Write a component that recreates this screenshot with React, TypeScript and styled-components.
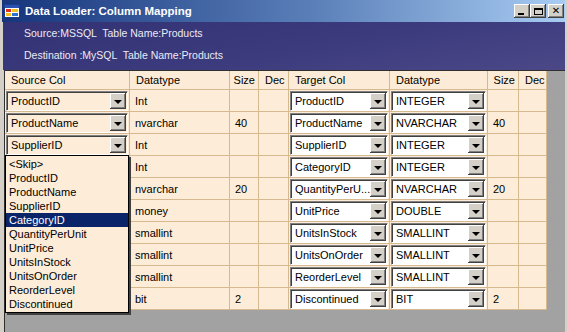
import React from 'react';
import styled, { createGlobalStyle } from 'styled-components';

const GlobalStyle = createGlobalStyle`
  html, body {
    margin: 0;
    padding: 0;
    background: #d4d0c8;
  }
  body {
    font-family: "Liberation Sans", Arial, sans-serif;
    font-size: 11px;
  }
`;

type MapRow = {
  src: string;
  type: string;
  size: string;
  tgt: string;
  ttype: string;
  tsize: string;
};

const rows: MapRow[] = [
  { src: 'ProductID', type: 'Int', size: '', tgt: 'ProductID', ttype: 'INTEGER', tsize: '' },
  { src: 'ProductName', type: 'nvarchar', size: '40', tgt: 'ProductName', ttype: 'NVARCHAR', tsize: '40' },
  { src: 'SupplierID', type: 'Int', size: '', tgt: 'SupplierID', ttype: 'INTEGER', tsize: '' },
  { src: 'CategoryID', type: 'Int', size: '', tgt: 'CategoryID', ttype: 'INTEGER', tsize: '' },
  { src: 'QuantityPerUnit', type: 'nvarchar', size: '20', tgt: 'QuantityPerU...', ttype: 'NVARCHAR', tsize: '20' },
  { src: 'UnitPrice', type: 'money', size: '', tgt: 'UnitPrice', ttype: 'DOUBLE', tsize: '' },
  { src: 'UnitsInStock', type: 'smallint', size: '', tgt: 'UnitsInStock', ttype: 'SMALLINT', tsize: '' },
  { src: 'UnitsOnOrder', type: 'smallint', size: '', tgt: 'UnitsOnOrder', ttype: 'SMALLINT', tsize: '' },
  { src: 'ReorderLevel', type: 'smallint', size: '', tgt: 'ReorderLevel', ttype: 'SMALLINT', tsize: '' },
  { src: 'Discontinued', type: 'bit', size: '2', tgt: 'Discontinued', ttype: 'BIT', tsize: '2' },
];

// the open list hangs from this row and hides the source cells below it
const openRow = 2;

const options = [
  '<Skip>',
  'ProductID',
  'ProductName',
  'SupplierID',
  'CategoryID',
  'QuantityPerUnit',
  'UnitPrice',
  'UnitsInStock',
  'UnitsOnOrder',
  'ReorderLevel',
  'Discontinued',
];

const TitleIcon = () => (
  <svg width="16" height="16" viewBox="0 0 16 16">
    <rect x="0.5" y="1.5" width="15" height="13" fill="#ffffff" stroke="#1a3c8c" />
    <rect x="1" y="2" width="14" height="3" fill="#2850b0" />
    <rect x="2" y="6" width="5" height="3" fill="#e03020" />
    <rect x="8" y="6" width="6" height="3" fill="#f0c020" />
    <rect x="2" y="10" width="5" height="3" fill="#f0c020" />
    <rect x="8" y="10" width="6" height="3" fill="#3070d0" />
  </svg>
);

const Combo = ({ value, $white }: { value?: string; $white?: boolean }) => (
  <ComboBox $white={$white}>
    <ComboText>{value}</ComboText>
    <DropButton>
      <Arrow />
    </DropButton>
  </ComboBox>
);

const App = () => {
  return (
    <>
      <GlobalStyle />
      <Frame>
        <TitleBar>
          <TitleIcon />
          <TitleText>Data Loader: Column Mapping</TitleText>
          <Controls>
            <CtlButton>
              <MinGlyph />
            </CtlButton>
            <CtlButton>
              <MaxGlyph />
            </CtlButton>
            <CtlButton $gap>
              <CloseGlyph>✕</CloseGlyph>
            </CtlButton>
          </Controls>
        </TitleBar>

        <InfoPanel>
          <InfoLine>Source:MSSQL  Table Name:Products</InfoLine>
          <InfoLine>Destination :MySQL  Table Name:Products</InfoLine>
        </InfoPanel>

        <GridArea>
          <Grid>
            <HeadCell>Source Col</HeadCell>
            <HeadCell>Datatype</HeadCell>
            <HeadCell $right>Size</HeadCell>
            <HeadCell>Dec</HeadCell>
            <HeadCell>Target Col</HeadCell>
            <HeadCell>Datatype</HeadCell>
            <HeadCell $right>Size</HeadCell>
            <HeadCell>Dec</HeadCell>

            {rows.map((r, i) => (
              <React.Fragment key={r.src}>
                <Cell $combo>
                  {i <= openRow ? <Combo value={r.src} /> : null}
                </Cell>
                <Cell>{r.type}</Cell>
                <Cell>{r.size}</Cell>
                <Cell />
                <Cell $combo>
                  <Combo value={r.tgt} $white />
                </Cell>
                <Cell $combo>
                  <Combo value={r.ttype} $white />
                </Cell>
                <Cell>{r.tsize}</Cell>
                <Cell />
              </React.Fragment>
            ))}
          </Grid>

          <DropList>
            {options.map((o) => (
              <DropItem key={o} $selected={o === 'CategoryID'}>
                {o}
              </DropItem>
            ))}
          </DropList>
        </GridArea>
      </Frame>
    </>
  );
};

export default App;

const Frame = styled.div`
  width: 567px;
  height: 332px;
  box-sizing: border-box;
  padding: 0 2px 0 3px;
  background: #d4d0c8;
  display: flex;
  flex-direction: column;
  overflow: hidden;
`;

const TitleBar = styled.div`
  height: 22px;
  flex: none;
  margin-left: -1px;
  box-sizing: border-box;
  padding: 0 0 0 2px;
  display: flex;
  align-items: center;
  gap: 5px;
  background: linear-gradient(to right, #16357c 0%, #5a7fb8 55%, #a8ccf2 100%);
`;

const TitleText = styled.div`
  color: #ffffff;
  font-weight: bold;
  font-size: 11.5px;
  flex: 1;
`;

const Controls = styled.div`
  display: flex;
  align-items: center;
  padding-right: 1px;
`;

const CtlButton = styled.div<{ $gap?: boolean }>`
  width: 16px;
  height: 14px;
  margin-left: ${({ $gap }) => ($gap ? '2px' : '0')};
  background: #d4d0c8;
  box-sizing: border-box;
  box-shadow: inset -1px -1px #404040, inset 1px 1px #ffffff, inset -2px -2px #808080;
  display: flex;
  align-items: center;
  justify-content: center;
`;

const MinGlyph = styled.div`
  width: 6px;
  height: 2px;
  background: #000;
  margin-top: 6px;
  margin-right: 2px;
`;

const MaxGlyph = styled.div`
  width: 9px;
  height: 7px;
  box-sizing: border-box;
  border: 1px solid #000;
  border-top-width: 2px;
`;

const CloseGlyph = styled.span`
  font-family: "DejaVu Sans", sans-serif;
  font-size: 10px;
  font-weight: bold;
  line-height: 1;
  color: #000;
`;

const InfoPanel = styled.div`
  height: 48px;
  flex: none;
  box-sizing: border-box;
  padding: 5px 0 0 21px;
  display: flex;
  flex-direction: column;
  gap: 9px;
  background: linear-gradient(170deg, #323274 0%, #3a3a7c 50%, #4c4888 100%);
`;

const InfoLine = styled.div`
  color: #ecebf4;
  font-size: 10.5px;
  line-height: 13px;
  white-space: pre;
`;

const GridArea = styled.div`
  position: relative;
  flex: 1;
  margin-left: 1px;
  border-top: 1px solid #303030;
  border-left: 1px solid #303030;
  background: #a2a2a2;
`;

const Grid = styled.div`
  display: grid;
  grid-template-columns: 125px 100px 29px 30px 101px 98px 31px 28px;
  grid-template-rows: 19px repeat(10, 22px);
  width: max-content;
`;

const HeadCell = styled.div<{ $right?: boolean }>`
  box-sizing: border-box;
  background: #fcebd6;
  border-right: 1px solid #d6b98f;
  border-bottom: 1px solid #d6b98f;
  display: flex;
  align-items: center;
  justify-content: ${({ $right }) => ($right ? 'flex-end' : 'flex-start')};
  padding: 0 ${({ $right }) => ($right ? '3px' : '0')} 0 ${({ $right }) => ($right ? '0' : '6px')};
  color: #000;
  white-space: nowrap;
`;

const Cell = styled.div<{ $combo?: boolean }>`
  box-sizing: border-box;
  background: #fdecd7;
  border-right: 1px solid #d6b98f;
  border-bottom: 1px solid #d6b98f;
  display: flex;
  align-items: center;
  padding: ${({ $combo }) => ($combo ? '0 1px' : '0 0 0 5px')};
  color: #000;
  white-space: nowrap;
  overflow: hidden;
`;

const ComboBox = styled.div<{ $white?: boolean }>`
  flex: 1;
  height: 20px;
  box-sizing: border-box;
  display: flex;
  align-items: center;
  background: ${({ $white }) => ($white ? '#ffffff' : '#fdecd7')};
  border-top: 1px solid #808080;
  border-left: 1px solid #808080;
  border-bottom: 1px solid #ffffff;
  border-right: 1px solid #ffffff;
  box-shadow: inset 1px 1px #404040;
  padding: 1px 1px 0 4px;
  min-width: 0;
`;

const ComboText = styled.div`
  flex: 1;
  min-width: 0;
  overflow: hidden;
  white-space: nowrap;
  color: #000;
`;

const DropButton = styled.div`
  width: 16px;
  height: 16px;
  flex: none;
  box-sizing: border-box;
  background: #d4d0c8;
  box-shadow: inset -1px -1px #404040, inset 1px 1px #ffffff, inset -2px -2px #808080;
  display: flex;
  align-items: center;
  justify-content: center;
`;

const Arrow = styled.div`
  width: 0;
  height: 0;
  border-left: 4px solid transparent;
  border-right: 4px solid transparent;
  border-top: 4px solid #000;
  margin-top: 1px;
  margin-right: 1px;
`;

const DropList = styled.div`
  position: absolute;
  left: 0;
  top: 84px;
  width: 124px;
  box-sizing: border-box;
  padding: 1px 0;
  background: #fdecd7;
  border: 1px solid #000;
  box-shadow: 2px 2px 0 #404040;
`;

const DropItem = styled.div<{ $selected?: boolean }>`
  height: 14px;
  line-height: 14px;
  padding-left: 3px;
  background: ${({ $selected }) => ($selected ? '#0a246a' : 'transparent')};
  color: ${({ $selected }) => ($selected ? '#ffffff' : '#000000')};
  white-space: nowrap;
`;
